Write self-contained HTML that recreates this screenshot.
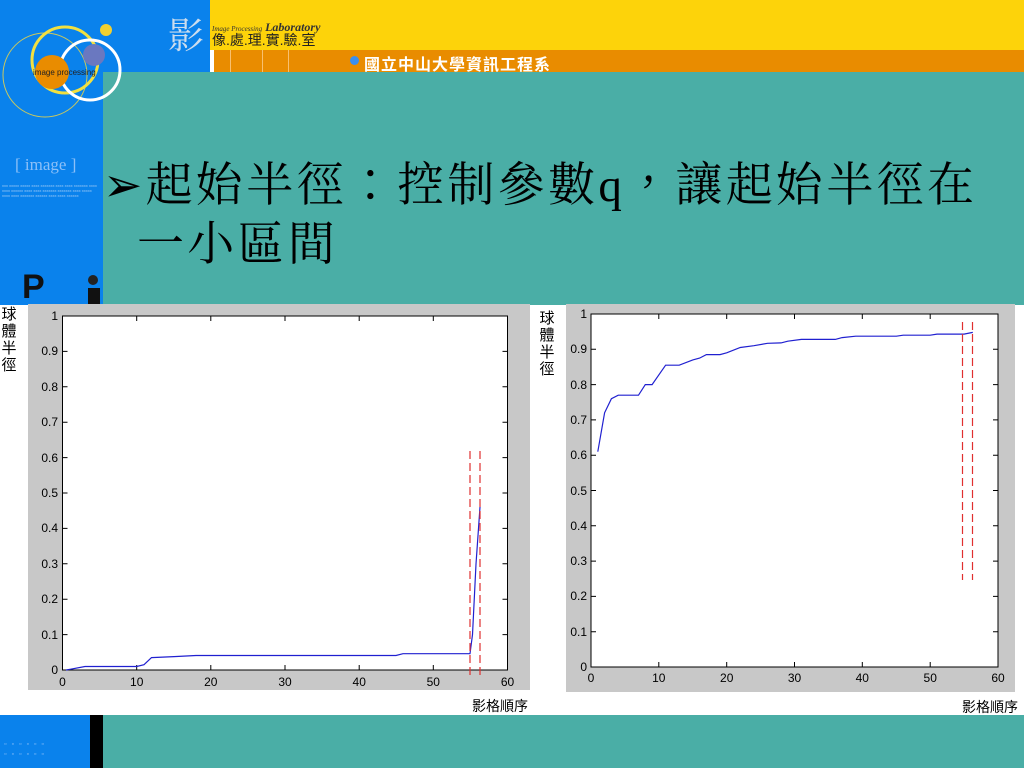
<!DOCTYPE html>
<html><head><meta charset="utf-8"><style>
*{margin:0;padding:0}
body{width:1024px;height:768px;position:relative;overflow:hidden;background:#fff;font-family:"Liberation Sans","Noto Sans CJK TC",sans-serif}
.a{position:absolute}
.vt{font-size:15px;line-height:17px;width:16px;text-align:center;color:#000}
.t{font-size:47px;line-height:56px;color:#000;font-family:'Liberation Serif','Noto Serif CJK TC',serif;white-space:nowrap;letter-spacing:3.3px}
</style></head><body>
<div class="a" style="left:0;top:0;width:1024px;height:305px;background:#4aaea6"></div>
<div class="a" style="left:0;top:0;width:210px;height:72px;background:#0a82ec"></div>
<div class="a" style="left:0;top:0;width:103px;height:305px;background:#0a82ec"></div>
<div class="a" style="left:210px;top:0;width:814px;height:50px;background:#fdd30a"></div>
<div class="a" style="left:210px;top:50px;width:814px;height:22px;background:#e98c00"></div>
<div class="a" style="left:210px;top:50px;width:4px;height:22px;background:#fff"></div>
<div class="a" style="left:230px;top:50px;width:1px;height:22px;background:#f8c070"></div>
<div class="a" style="left:262px;top:50px;width:1px;height:22px;background:#f8c070"></div>
<div class="a" style="left:288px;top:50px;width:1px;height:22px;background:#f8c070"></div>
<div class="a" style="left:350px;top:56px;width:9px;height:9px;border-radius:50%;background:#3a8ff0"></div>
<div class="a" style="left:364px;top:51px;font-size:16px;color:#fff;font-weight:bold;letter-spacing:1px">國立中山大學資訊工程系</div>
<div class="a" style="left:212px;top:20px;font-size:12px;color:#333;font-style:italic;font-family:'Liberation Serif',serif"><span style="font-size:7px">Image Processing</span> <b>Laboratory</b></div>
<div class="a" style="left:212px;top:32px;font-size:14px;color:#222;line-height:16px">像.處.理.實.驗.室</div>
<div class="a" style="left:168px;top:8px;font-size:36px;color:#cde;font-family:'Noto Serif CJK SC',serif">影</div>
<svg class="a" style="left:0;top:0" width="210" height="130">
<circle cx="45" cy="75" r="42" fill="none" stroke="#c8c860" stroke-width="1"/>
<circle cx="65" cy="60" r="33" fill="none" stroke="#f2e040" stroke-width="3"/>
<circle cx="90" cy="70" r="30" fill="none" stroke="#fff" stroke-width="3"/>
<circle cx="52" cy="72" r="17" fill="#e98c00"/>
<circle cx="94" cy="55" r="11" fill="#6a78c0"/>
<circle cx="106" cy="30" r="6" fill="#f2d030"/>
<text x="33" y="75" font-size="8" fill="#222" font-family="Liberation Sans">image processing</text>
</svg>
<div class="a" style="left:15px;top:155px;font-size:17px;color:#8cc0f8;font-family:'Liberation Serif',serif">[ image ]</div>
<div class="a" style="left:2px;top:183px;width:98px;font-size:4px;line-height:5px;color:#9cc8f4">xxx xxxxx xxxxx xxxx xxxxxxx xxxx xxxx xxxxxxx xxxx xxxx xxxxxx xxxx xxxx xxxxxxx xxxxxxx xxxx xxxxx xxxx xxxx xxxxxxx xxxxxx xxxx xxxx xxxxxx</div>
<div class="a" style="left:22px;top:270px;font-size:34px;font-weight:bold;color:#111;line-height:34px">P</div>
<div class="a" style="left:88px;top:275px;width:10px;height:10px;border-radius:50%;background:#222"></div>
<div class="a" style="left:88px;top:288px;width:12px;height:17px;background:#111"></div>
<div class="a t" style="left:103px;top:158px">➢起始半徑：控制參數q，讓起始半徑在</div>
<div class="a t" style="left:137px;top:217px">一小區間</div>

<div class="a" style="left:0;top:715px;width:90px;height:53px;background:#0a82ec"></div>
<div class="a" style="left:90px;top:715px;width:13px;height:53px;background:#000"></div>
<div class="a" style="left:103px;top:715px;width:921px;height:53px;background:#4aaea6"></div>
<div class="a" style="left:4px;top:740px;font-size:7px;color:#8cc0f8;letter-spacing:5px;line-height:10px">▫▫▫▫▫▫<br>▫▫▫▫▫▫</div>

<svg class="a" style="left:0;top:304px" width="1024" height="411">
<g font-family="Liberation Sans" font-size="12" fill="#000">
<rect x="28" y="0" width="502" height="386" fill="#c8c8c8"/>
<rect x="62.5" y="12" width="445" height="354" fill="#fff" stroke="#000"/>
<g stroke="#000">
<path d="M62.5,366h5M62.5,330.6h5M62.5,295.2h5M62.5,259.8h5M62.5,224.4h5M62.5,189h5M62.5,153.6h5M62.5,118.2h5M62.5,82.8h5M62.5,47.4h5M502.5,330.6h5M502.5,295.2h5M502.5,259.8h5M502.5,224.4h5M502.5,189h5M502.5,153.6h5M502.5,118.2h5M502.5,82.8h5M502.5,47.4h5"/>
<path d="M136.7,366v-5M210.8,366v-5M285,366v-5M359.2,366v-5M433.3,366v-5M136.7,12v5M210.8,12v5M285,12v5M359.2,12v5M433.3,12v5"/>
</g>
<g text-anchor="end"><text x="58" y="370">0</text><text x="58" y="335">0.1</text><text x="58" y="299">0.2</text><text x="58" y="264">0.3</text><text x="58" y="228">0.4</text><text x="58" y="193">0.5</text><text x="58" y="158">0.6</text><text x="58" y="122">0.7</text><text x="58" y="87">0.8</text><text x="58" y="51">0.9</text><text x="58" y="16">1</text></g>
<g text-anchor="middle"><text x="62.5" y="382">0</text><text x="136.7" y="382">10</text><text x="210.8" y="382">20</text><text x="285" y="382">30</text><text x="359.2" y="382">40</text><text x="433.3" y="382">50</text><text x="507.5" y="382">60</text></g>
<path fill="none" stroke="#2020d0" stroke-width="1.2" d="M66,366L70,365.3L85,362.5L136.7,362.5L144,360.7L151.5,353.6L174,352.6L196,351.5L396,351.5L403,349.7L470,349.7L472.5,330.6L476,260L480,203"/>
<path stroke="#e03030" stroke-width="1.2" stroke-dasharray="8,4" d="M470,147V373M480,147V373"/>
<rect x="566" y="0" width="449" height="388" fill="#c8c8c8"/>
<rect x="591" y="10" width="407" height="353" fill="#fff" stroke="#000"/>
<path stroke="#000" d="M591,327.7h5M591,292.4h5M591,257.1h5M591,221.8h5M591,186.5h5M591,151.2h5M591,115.9h5M591,80.6h5M591,45.3h5M993,327.7h5M993,292.4h5M993,257.1h5M993,221.8h5M993,186.5h5M993,151.2h5M993,115.9h5M993,80.6h5M993,45.3h5M658.8,363v-5M726.7,363v-5M794.5,363v-5M862.3,363v-5M930.2,363v-5M658.8,10v5M726.7,10v5M794.5,10v5M862.3,10v5M930.2,10v5"/>
<g text-anchor="end"><text x="587" y="367">0</text><text x="587" y="332">0.1</text><text x="587" y="296">0.2</text><text x="587" y="261">0.3</text><text x="587" y="226">0.4</text><text x="587" y="191">0.5</text><text x="587" y="155">0.6</text><text x="587" y="120">0.7</text><text x="587" y="85">0.8</text><text x="587" y="49">0.9</text><text x="587" y="14">1</text></g>
<g text-anchor="middle"><text x="591" y="378">0</text><text x="658.8" y="378">10</text><text x="726.7" y="378">20</text><text x="794.5" y="378">30</text><text x="862.3" y="378">40</text><text x="930.2" y="378">50</text><text x="998" y="378">60</text></g>
<path fill="none" stroke="#2020d0" stroke-width="1.2" d="M597.8,147.7L604.6,108.8L611.4,94.7L618.2,91.2L638.5,91.2L645.3,80.6L652.1,80.6L665.6,61.2L679.2,61.2L692.8,55.9L699.6,54.1L706.4,50.6L720,50.6L726.7,48.8L740.3,43.5L753.9,41.7L767.5,39.3L781,38.9L787.8,37.2L801.4,35.4L835.3,35.4L842.1,33.6L855.7,32.2L896.4,32.2L903.2,31.2L930.2,31.2L937,30.1L964,30.1L972.8,28.4"/>
<path stroke="#e03030" stroke-width="1.2" stroke-dasharray="8,4" d="M962.5,18V276M972.5,18V276"/>
</g>
</svg>
<div class="a vt" style="left:1px;top:306px">球體半徑</div>
<div class="a vt" style="left:539px;top:310px">球體半徑</div>
<div class="a" style="left:472px;top:696px;font-size:14px">影格順序</div>
<div class="a" style="left:962px;top:697px;font-size:14px">影格順序</div>
</body></html>
